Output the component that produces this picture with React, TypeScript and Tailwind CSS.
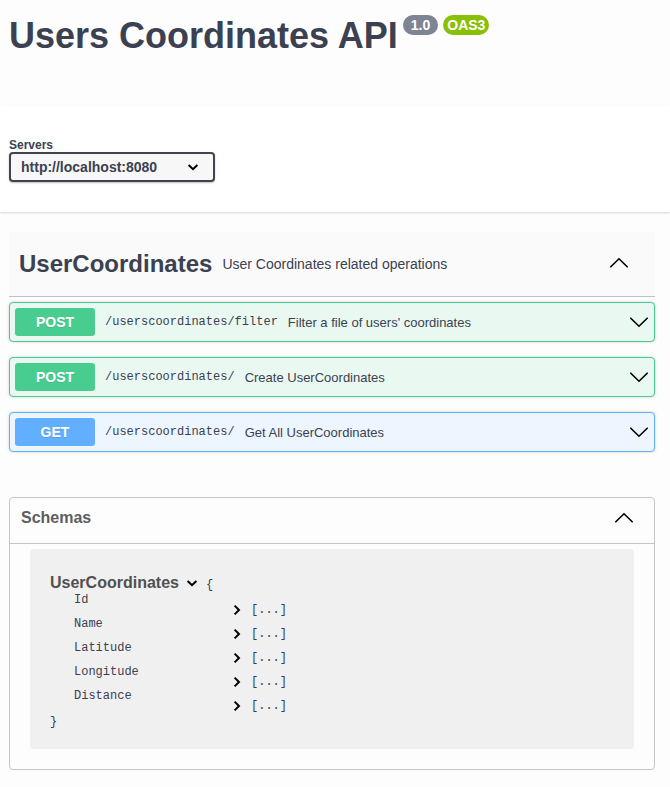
import React from "react";

type Operation = {
  method: "POST" | "GET";
  path: string;
  summary: string;
};

const operations: Operation[] = [
  { method: "POST", path: "/userscoordinates/filter", summary: "Filter a file of users' coordinates" },
  { method: "POST", path: "/userscoordinates/", summary: "Create UserCoordinates" },
  { method: "GET", path: "/userscoordinates/", summary: "Get All UserCoordinates" },
];

const properties = ["Id", "Name", "Latitude", "Longitude", "Distance"];

const rowStyles = {
  POST: "border-[#49cc90] bg-[#e9f8f1]",
  GET: "border-[#61affe] bg-[#edf5fe]",
};

const methodStyles = {
  POST: "bg-[#49cc90]",
  GET: "bg-[#61affe]",
};

function LargeArrow({ up = false }: { up?: boolean }) {
  return (
    <svg className="block h-5 w-5 shrink-0" viewBox="0 0 20 20" fill="none" stroke="black" strokeWidth="1.6" strokeLinecap="round" aria-hidden="true">
      <path d={up ? "M1.8 13.8 10 5.8 18.2 13.8" : "M1.8 6.2 10 14.2 18.2 6.2"} />
    </svg>
  );
}

function SmallArrow({ right = false }: { right?: boolean }) {
  return (
    <svg className="block h-5 w-5 shrink-0" viewBox="0 0 20 20" fill="none" stroke="black" strokeWidth="2" aria-hidden="true">
      <path d={right ? "M7.6 5.6 12 10 7.6 14.4" : "M5.6 8 10 12.2 14.4 8"} />
    </svg>
  );
}

function OperationRow({ method, path, summary }: Operation) {
  return (
    <button
      type="button"
      className={`flex w-full items-center rounded border p-[5px] text-left shadow-[0_0_3px_rgba(0,0,0,0.19)] ${rowStyles[method]}`}
    >
      <span
        className={`w-20 shrink-0 rounded-[3px] text-center text-sm leading-7 font-bold text-white [text-shadow:0_1px_0_rgba(0,0,0,0.1)] ${methodStyles[method]}`}
      >
        {method}
      </span>
      <span className="px-2.5 font-['Liberation_Mono',monospace] text-xs">{path}</span>
      <span className="min-w-0 flex-1 pt-0.5 text-[13px]">{summary}</span>
      <LargeArrow />
    </button>
  );
}

export default function App() {
  return (
    <div className="min-h-screen bg-[#fdfdfd] font-['Liberation_Sans',Arial,sans-serif] text-[#3b4151]">
      <header className="flex items-start px-[9px] pt-[15px] pb-[49px]">
        <h1 className="text-4xl leading-[42px] font-bold">Users Coordinates API</h1>
        <div className="ml-[5px] flex gap-[5px] text-sm leading-5 font-bold text-white">
          <span className="rounded-full bg-[#7d8492] px-2">1.0</span>
          <span className="rounded-full bg-[#89bf04] px-1">OAS3</span>
        </div>
      </header>

      <section className="bg-white px-[9px] pt-8 pb-[30px] shadow-[0_1px_2px_rgba(0,0,0,0.15)]">
        <label htmlFor="server" className="block text-xs leading-[14px] font-bold">
          Servers
        </label>
        <div className="relative w-[206px]">
          <select
            id="server"
            className="block h-[30px] w-full appearance-none rounded border-2 border-[#41444e] bg-[#f7f7f7] pr-8 pl-2.5 text-sm leading-5 font-bold shadow-[0_1px_2px_rgba(0,0,0,0.25)]"
          >
            <option>http://localhost:8080</option>
          </select>
          <span className="pointer-events-none absolute inset-y-0 right-3 flex items-center">
            <SmallArrow />
          </span>
        </div>
      </section>

      <main className="pt-5 pr-[15px] pb-4 pl-[9px]">
        <section>
          <div className="flex items-center border-b border-[#bfc0c2] bg-[#fafafa] py-4 pr-[26px] pl-2.5">
            <h2 className="text-2xl font-bold">UserCoordinates</h2>
            <p className="flex-1 px-2.5 text-sm">User Coordinates related operations</p>
            <button type="button" aria-label="Collapse operations" className="pb-0.5">
              <LargeArrow up />
            </button>
          </div>
          <div className="mt-[5px] flex flex-col gap-[15px]">
            {operations.map((operation) => (
              <OperationRow key={operation.method + operation.path} {...operation} />
            ))}
          </div>
        </section>

        <section className="mt-[45px] rounded border border-[#c4c5c9]">
          <div className="flex items-center border-b border-[#c4c5c9] pt-2 pr-5 pb-[13px] pl-[11px]">
            <h2 className="flex-1 text-base font-bold text-[#5d5d5f]">Schemas</h2>
            <button type="button" aria-label="Collapse schemas">
              <LargeArrow up />
            </button>
          </div>

          <div className="mx-5 mt-[5px] mb-5 rounded bg-[#f0f0f0] px-5 pt-6 pb-[18px] font-['Liberation_Mono',monospace] text-xs">
            <button type="button" className="flex h-5 items-center">
              <span className="font-['Liberation_Sans',Arial,sans-serif] text-base leading-5 font-bold text-[#505050]">
                UserCoordinates
              </span>
              <span className="pr-1 pl-[3px]">
                <SmallArrow />
              </span>
              <span className="pt-1 leading-4">{"{"}</span>
            </button>
            <table className="ml-6 border-collapse">
              <tbody>
                {properties.map((name) => (
                  <tr key={name} className="h-6">
                    <th scope="row" className="w-[153px] p-0 text-left align-top leading-[14px] font-normal">
                      {name}
                    </th>
                    <td className="p-0 align-bottom">
                      <button type="button" className="flex h-3.5 items-center gap-1">
                        <SmallArrow right />
                        <span>[...]</span>
                      </button>
                    </td>
                  </tr>
                ))}
              </tbody>
            </table>
            <p className="leading-[18px]">{"}"}</p>
          </div>
        </section>
      </main>
    </div>
  );
}
